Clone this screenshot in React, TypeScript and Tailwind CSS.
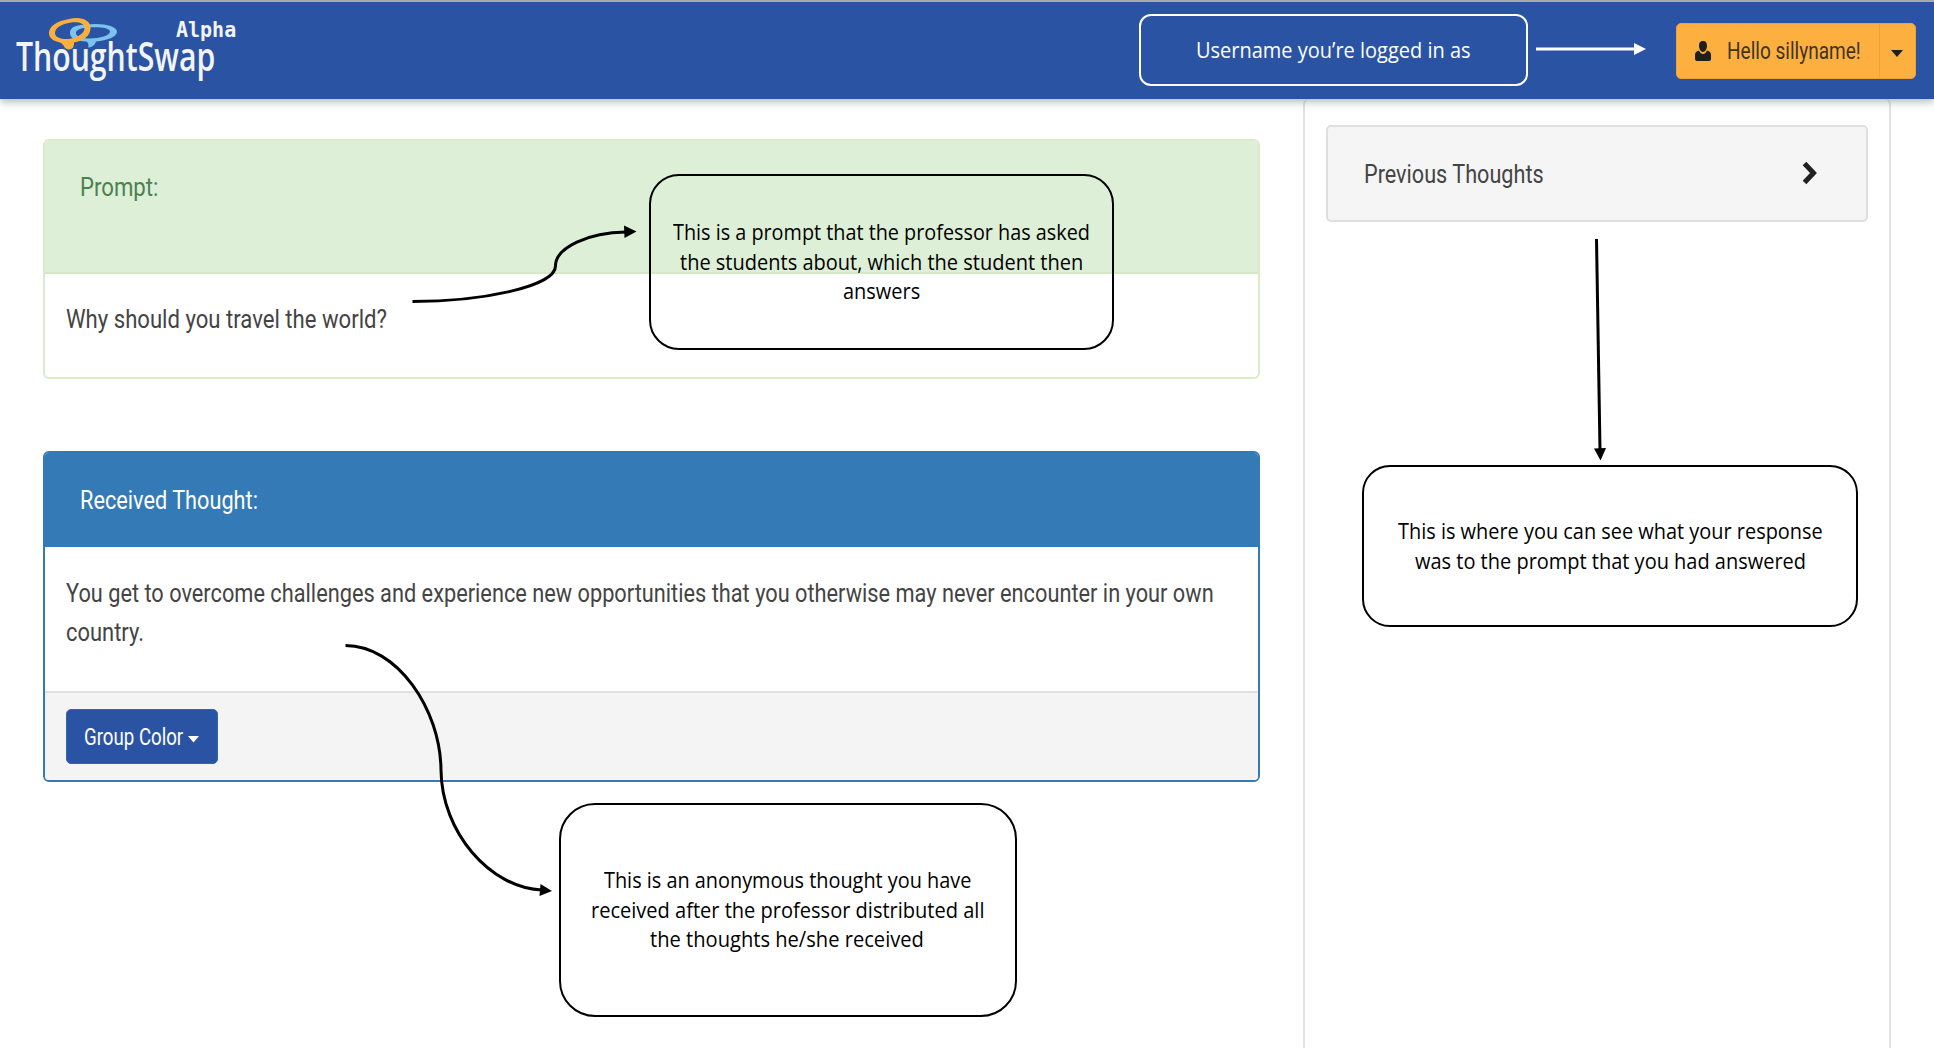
import { useLayoutEffect, useRef, useState, type ReactNode } from 'react';

type FitProps = { width: number; className?: string; children: ReactNode };

/** One line of text, condensed or widened to an exact width. */
function Fit({ width, className = '', children }: FitProps) {
  const ref = useRef<HTMLSpanElement>(null);
  const [scale, setScale] = useState(1);
  useLayoutEffect(() => {
    if (ref.current) setScale(width / ref.current.offsetWidth);
  }, [width]);
  return (
    <span className={`block whitespace-nowrap ${className}`} style={{ width }}>
      <span ref={ref} className="inline-block origin-left" style={{ transform: `scaleX(${scale})` }}>
        {children}
      </span>
    </span>
  );
}

type Line = { text: string; width: number };

function Callout({ className, lines }: { className: string; lines: Line[] }) {
  return (
    <div
      className={`absolute flex flex-col items-center justify-center border-2 font-['Open_Sans',sans-serif] text-[21px] leading-[29.5px] ${className}`}
    >
      {lines.map((l) => (
        <Fit key={l.text} width={l.width}>{l.text}</Fit>
      ))}
    </div>
  );
}

function Logo() {
  return (
    <div className="relative h-full w-[240px] text-[#f4f4f6]">
      <svg className="absolute left-[46px] top-[14px]" width="74" height="38" viewBox="0 0 74 38" fillRule="evenodd">
        <path
          d="M41 8.500C56 6.500 71 10 71 15.500C71 21 61 24.500 50 25.500C49 28 48 31 42 31.500C43 29 42.500 27 40.500 25.500C30 25 23 22 24 16C25 10 32 9 41 8.500ZM42 11.500C34 12 29.500 14 30 17.500C30.500 21 37 22.500 44 22.500C54 22.500 64 19.500 64 15.500C64 11.500 52 10.500 42 11.500Z"
          fill="#7cc4ee"
        />
        <path
          d="M23 3C35 0 44.500 4 44.500 12C44.500 20 37 25 28 26.500C28 30 27.500 33 23 33.500C18 33.500 19 29 14 26.500C7 25 3 22 3 17C3 10 11 5 23 3ZM25 6.500C15 8 9 12 9 17C9 21 14 23 21 23C30 22.500 38.500 18 38.500 12C38.500 7.500 33 5.500 25 6.500Z"
          fill="#fbaf3f"
        />
      </svg>
      <Fit width={199} className="absolute left-[16px] top-[36px] font-['Open_Sans',sans-serif] text-[39px] font-semibold leading-[36px]">ThoughtSwap</Fit>
      <Fit width={60} className="absolute left-[176px] top-[18px] font-['DejaVu_Sans_Mono',monospace] text-[22px] font-bold leading-[20px]">Alpha</Fit>
    </div>
  );
}

function Header() {
  return (
    <header className="relative z-10 flex h-[99px] items-stretch justify-between border-t-2 border-[#a9a9a9] bg-[#2a54a3] pr-[18px] shadow-[0_3px_8px_rgba(0,0,0,0.28)]">
      <Logo />
      <button className="mt-[21px] flex h-[56px] w-[240px] rounded-[5px] border border-[#eda23a] bg-[#fdb040] text-[#3d3523]">
        <span className="flex h-full w-[203px] items-center border-r border-[#eda23a] pl-[17px]">
          <svg width="18" height="20" viewBox="0 0 18 20" fill="#1f1f1f">
            <path d="M9 0C6 0 5 2 5 5C5 8 7 11 9 11C11 11 13 8 13 5C13 2 12 0 9 0ZM5 9.500C2 10.500 1 11.500 1 14V18C1 19 2 20 3 20H15C16 20 17 19 17 18V14C17 11.500 16 10.500 13 9.500C12 12 10.500 13 9 13C7.500 13 6 12 5 9.500Z" />
          </svg>
          <Fit width={134} className="ml-[15px] pt-[1px] font-['Roboto',sans-serif] text-[23px]">Hello sillyname!</Fit>
        </span>
        <span className="flex flex-1 items-center justify-center pr-[2px] pt-[5px]">
          <svg width="12" height="7" viewBox="0 0 12 7" fill="#1f1f1f"><path d="M0 0H12L6 7Z" /></svg>
        </span>
      </button>
    </header>
  );
}

function Annotations() {
  return (
    <div className="pointer-events-none absolute inset-0 z-20 text-black">
      <svg className="absolute inset-0" width="1934" height="1048" viewBox="0 0 1934 1048" fill="none">
        <path d="M1536 49H1636" stroke="#fff" strokeWidth="3" />
        <path d="M1634 43L1646 49L1634 55Z" fill="#fff" />
        <path d="M412.500 301.500C480 301.500 555.500 287 555.500 266C555.500 247 589 232.500 626 232" stroke="#000" strokeWidth="3" />
        <path d="M624 225.500L636.500 231.500L624.500 238Z" fill="#000" />
        <path d="M345.500 645.500C397 645.500 440.500 709 441 770C441.500 832 490 888 542 890" stroke="#000" strokeWidth="3" />
        <path d="M540.500 884L552 891L539.500 896Z" fill="#000" />
        <path d="M1596.500 239L1600 450" stroke="#000" strokeWidth="3" />
        <path d="M1594 448.500L1606 448L1600.500 460.500Z" fill="#000" />
      </svg>
      <Callout className="left-[1139px] top-[14px] h-[72px] w-[389px] rounded-[12px] border-white pt-[1px] text-white" lines={[{ text: 'Username you’re logged in as', width: 275 }]} />
      <Callout
        className="left-[649px] top-[174px] h-[176px] w-[465px] rounded-[30px] border-black pt-[1px]"
        lines={[
          { text: 'This is a prompt that the professor has asked', width: 417 },
          { text: 'the students about, which the student then', width: 403 },
          { text: 'answers', width: 77 },
        ]}
      />
      <Callout
        className="left-[559px] top-[803px] h-[214px] w-[458px] rounded-[36px] border-black pr-[2px] pt-[1px]"
        lines={[
          { text: 'This is an anonymous thought you have', width: 367 },
          { text: 'received after the professor distributed all', width: 393 },
          { text: 'the thoughts he/she received', width: 274 },
        ]}
      />
      <Callout
        className="left-[1362px] top-[465px] h-[162px] w-[496px] rounded-[28px] border-black pt-[1px]"
        lines={[
          { text: 'This is where you can see what your response', width: 425 },
          { text: 'was to the prompt that you had answered', width: 391 },
        ]}
      />
    </div>
  );
}

export default function App() {
  return (
    <div className="relative flex h-[1048px] w-[1934px] flex-col overflow-hidden bg-white font-['Roboto',sans-serif] text-[25px] leading-[39px] text-[#444]">
      <Header />
      <main className="flex flex-1">
        <div className="flex w-[1303px] flex-col gap-[72px] pl-[43px] pt-[40px]">
          <section className="h-[240px] w-[1217px] overflow-hidden rounded-[6px] border-2 border-[#d9ebc9] bg-white">
            <div className="h-[133px] border-b-2 border-[#d6e9c6] bg-[#deefd8] pl-[35px] pt-[27px] text-[#4a8250]">
              <Fit width={78}>Prompt:</Fit>
            </div>
            <div className="pl-[21px] pt-[26px]">
              <Fit width={321}>Why should you travel the world?</Fit>
            </div>
          </section>
          <section className="flex h-[331px] w-[1217px] flex-col overflow-hidden rounded-[6px] border-2 border-[#337ab7] bg-white">
            <div className="h-[94px] bg-[#337ab7] pl-[35px] pt-[28px] text-white">
              <Fit width={178}>Received Thought:</Fit>
            </div>
            <div className="h-[144px] pl-[21px] pt-[27px]">
              <Fit width={1148}>You get to overcome challenges and experience new opportunities that you otherwise may never encounter in your own</Fit>
              <Fit width={78}>country.</Fit>
            </div>
            <div className="flex-1 border-t-2 border-[#e0e0e0] bg-[#f4f4f4] pl-[21px] pt-[16px]">
              <button className="flex h-[55px] w-[152px] items-center gap-[5px] rounded-[5px] border border-[#2d6ca2] bg-[#2a54a3] pl-[17px] text-[23px] text-white">
                <Fit width={99} className="pt-[2px]">Group Color</Fit>
                <svg className="mt-[5px]" width="11" height="7" viewBox="0 0 11 7" fill="#fff"><path d="M0 0H11L5.500 6.500Z" /></svg>
              </button>
            </div>
          </section>
        </div>
        <aside className="w-[588px] rounded-t-[6px] border-x-2 border-[#e2e2e2] px-[21px] pt-[26px]">
          <div className="flex h-[97px] items-center justify-between rounded-[5px] border-2 border-[#dfdfdf] bg-[#f5f5f5] pl-[36px] pr-[49px]">
            <Fit width={180} className="pt-[1px]">Previous Thoughts</Fit>
            <svg className="mb-[2px]" width="15" height="24" viewBox="0 0 15 24" fill="none"><path d="M2.500 2.500L11.500 12L2.500 21.500" stroke="#222" strokeWidth="5" /></svg>
          </div>
        </aside>
      </main>
      <Annotations />
    </div>
  );
}
